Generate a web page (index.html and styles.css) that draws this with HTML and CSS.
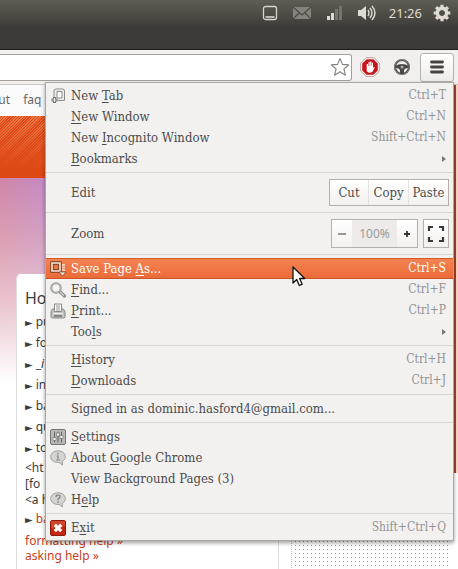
FILE: index.html
```html
<!DOCTYPE html>
<html lang="en">
<head>
<meta charset="utf-8">
<title>Browser menu</title>
<link rel="stylesheet" href="styles.css">
</head>
<body>
<header class="panel">
  <svg class="tray" width="16" height="16" viewBox="0 0 16 16"><rect x="1.500" y="1.500" width="13" height="13" rx="2" fill="none" stroke="#d8d4cc" stroke-width="1.300"/><path d="M3.500 12h9" stroke="#e4e0d8" stroke-width="1.500"/></svg>
  <svg class="tray mail" width="20" height="16" viewBox="0 0 20 16"><path d="M1 2h18v12H1z" fill="#86837c"/><path d="M1 2l9 8 9-8M1 14l6-6M19 14l-6-6" fill="none" stroke="#4b4944" stroke-width="1.200"/></svg>
  <svg class="tray signal" width="16" height="16" viewBox="0 0 16 16"><path d="M0 11h3v4H0zM4 8h3v7H4z" fill="#dfdbd2"/><path d="M8 4h3v11H8zM12 1h3v14h-3z" fill="#77746d"/></svg>
  <svg class="tray sound" width="20" height="16" viewBox="0 0 20 16"><path d="M1 5h3l5-4v14l-5-4H1z" fill="#dfdbd2"/><path d="M11 5q2 3 0 6M13 3q4 5 0 10M15 1q6 7 0 14" fill="none" stroke="#dfdbd2" stroke-width="1.400"/></svg>
  <span class="clock">21:26</span>
  <svg class="tray" width="18" height="18" viewBox="-9 -9 18 18"><circle r="4.700" fill="none" stroke="#dfdbd2" stroke-width="3.400"/><path d="M0-8.300V-5M0 5v3.300M-8.300 0H-5M5 0h3.300M-5.900-5.900l2.400 2.400M3.500 3.500l2.400 2.400M-5.900 5.900l2.400-2.400M3.500-3.500l2.400-2.400" stroke="#dfdbd2" stroke-width="3.200"/></svg>
</header>
<div class="toolbar">
  <div class="address">
    <input type="text" aria-label="Address">
    <button class="plain" aria-label="Bookmark this page"><svg width="20" height="20" viewBox="0 0 20 20"><path d="M10 1.500l2.400 5.900 6.300.5-4.800 4.100 1.500 6.200-5.400-3.400-5.400 3.400 1.500-6.200L1.300 7.900l6.300-.5z" fill="#fff" stroke="#85827e" stroke-width="1.100" stroke-linejoin="round"/></svg></button>
  </div>
  <button class="plain" aria-label="Ad blocker"><svg width="20" height="20" viewBox="0 0 20 20"><path d="M6 .7h8L19.300 6v8L14 19.300H6L.7 14V6z" fill="#fff" stroke="#b9817f" stroke-width=".8"/><path d="M6.600 2.200h6.800l4.400 4.400v6.800l-4.400 4.400H6.600l-4.400-4.400V6.600z" fill="#c9141c"/><path d="M6.700 7v5.500q0 3.200 3.300 3.200 2.200 0 3-1.700l1.700-3.700q-.9-.7-1.700 1V5.700h-1.200V9h-.4V4.500h-1.300V9h-.4V5H8.500v4h-.5V7z" fill="#fff"/></svg></button>
  <button class="plain wheel" aria-label="Steering wheel"><svg width="18" height="18" viewBox="0 0 18 18"><circle cx="9" cy="9" r="7" fill="#eeedeb" stroke="#55524f" stroke-width="2.200"/><circle cx="9" cy="9" r="7.400" fill="none" stroke="#a19e9a" stroke-width=".6"/><path d="M2 8q7-4 14 0l-1 2q-3 0-4 2v4H7v-4q-1-2-4-2z" fill="#4b4946"/><circle cx="9" cy="9" r="1.500" fill="#aaa"/></svg></button>
  <button class="menu-button" aria-label="Menu"><svg width="14" height="14" viewBox="0 0 14 14"><path d="M1.500 2h11M1.500 7h11M1.500 12h11" stroke="#45423f" stroke-width="2.800" stroke-linecap="round"/></svg></button>
</div>
<div class="page">
  <main class="site">
    <nav class="links"><a href="#">about</a><a href="#">faq</a></nav>
    <div class="banner"></div>
    <div class="columns">
      <section class="card">
        <h2>Ho</h2>
        <ul class="tips">
          <li>pu</li><li>fo</li><li>_<i>i</i></li><li>in</li><li>ba</li><li>qu</li><li>to</li>
        </ul>
        <p class="code">&lt;ht<br>[fo<br>&lt;a h</p>
        <ul class="tips hot"><li><a href="#">ba</a></li></ul>
        <p class="more"><a href="#">formatting help »</a><br><a href="#">asking help »</a></p>
      </section>
      <div class="dots"></div>
    </div>
  </main>
  <div class="edge"></div>
</div>

<div class="menu" role="menu">
  <button class="item" role="menuitem"><svg class="icon" width="16" height="16" viewBox="0 0 16 16"><path d="M4 9V3q0-2 2-2h6.500q2 0 2 2v9.500H7.500" fill="#ededeb" stroke="#8a8a86"/><path d="M7 3.500h5v6.500H7z" fill="#fff" stroke="#8a8a86"/><path d="M4.500 9v6M1.500 12h6" stroke="#777773" stroke-width="3"/><path d="M4.500 10v4M2.500 12h4" stroke="#e6e6e4"/></svg><span>New <u>T</u>ab</span><kbd>Ctrl+T</kbd></button>
  <button class="item" role="menuitem"><span><u>N</u>ew Window</span><kbd>Ctrl+N</kbd></button>
  <button class="item" role="menuitem"><span>New <u>I</u>ncognito Window</span><kbd>Shift+Ctrl+N</kbd></button>
  <button class="item" role="menuitem"><span><u>B</u>ookmarks</span><i class="arrow"></i></button>
  <hr>
  <div class="item edit"><span>Edit</span>
    <div class="group"><button>Cut</button><button>Copy</button><button>Paste</button></div>
  </div>
  <hr>
  <div class="item zoom"><span>Zoom</span>
    <div class="group"><button class="step" aria-label="Zoom out"><svg width="10" height="10" viewBox="0 0 10 10"><path d="M1 5h8" stroke="#777" stroke-width="1.500"/></svg></button><output>100%</output><button class="step" aria-label="Zoom in"><svg width="10" height="10" viewBox="0 0 10 10"><path d="M2 5h6M5 2v6" stroke="#333" stroke-width="1.800"/></svg></button></div>
    <div class="group"><button class="full" aria-label="Full screen"><svg width="18" height="18" viewBox="0 0 18 18"><path d="M2 6V2h4M12 2h4v4M16 12v4h-4M6 16H2v-4" fill="none" stroke="#3b3937" stroke-width="2.200"/></svg></button></div>
  </div>
  <hr>
  <button class="item active" role="menuitem"><svg class="icon" width="16" height="16" viewBox="0 0 16 16"><path d="M2 2h8v8H2z" fill="#e77443" stroke="#71412d" stroke-width="3.400"/><path d="M2 2h8v8H2z" fill="none" stroke="#ffe6d4" stroke-width="1.600"/><path d="M12 4h3M12 6.500h3M12 9h3" stroke="#ffe6d4" stroke-width="1.300"/><path d="M9 11h7l-3.500 4z" fill="#ffe6d4" stroke="#71412d" stroke-width=".7"/></svg><span>Save Page <u>A</u>s...</span><kbd>Ctrl+S</kbd></button>
  <button class="item" role="menuitem"><svg class="icon" width="16" height="16" viewBox="0 0 16 16"><path d="M9 9l5.500 5" stroke="#8b8b87" stroke-width="3.200" stroke-linecap="round"/><path d="M10 10l4 3.700" stroke="#d4d4d1" stroke-width="1.200"/><circle cx="6" cy="6" r="4.700" fill="#f5f5f4" stroke="#8b8b87" stroke-width="2"/><circle cx="6" cy="6" r="4.700" fill="none" stroke="#c9c9c6" stroke-width=".8"/></svg><span><u>F</u>ind...</span><kbd>Ctrl+F</kbd></button>
  <button class="item" role="menuitem"><svg class="icon" width="16" height="16" viewBox="0 0 16 16"><path d="M2.500 6L1 9v4.500q0 1.500 1.500 1.500h11q1.500 0 1.500-1.500V9l-1.500-3z" fill="#c4c4c1" stroke="#868683"/><path d="M4.500 1h7v7.500h-7z" fill="#fafafa" stroke="#898986"/><path d="M6 3h4M6 5h4M6 7h4" stroke="#999"/><path d="M3 10.500h10" stroke="#eee"/><path d="M4 13h8" stroke="#747471" stroke-width="1.500"/></svg><span><u>P</u>rint...</span><kbd>Ctrl+P</kbd></button>
  <button class="item" role="menuitem"><span>Too<u>l</u>s</span><i class="arrow"></i></button>
  <hr>
  <button class="item" role="menuitem"><span><u>H</u>istory</span><kbd>Ctrl+H</kbd></button>
  <button class="item" role="menuitem"><span><u>D</u>ownloads</span><kbd>Ctrl+J</kbd></button>
  <hr>
  <button class="item" role="menuitem"><span>Signed in as dominic.hasford4@gmail.com...</span></button>
  <hr>
  <button class="item" role="menuitem"><svg class="icon" width="16" height="16" viewBox="0 0 16 16"><rect x=".5" y=".5" width="15" height="15" rx="1.500" fill="#b9b9b6" stroke="#767673"/><path d="M4.500 2.500v11M8 2.500v11M11.500 2.500v11" stroke="#666663"/><path d="M3 8.500h3v3H3zM6.500 4h3v3h-3zM10 6.500h3v3h-3z" fill="#f5f5f3" stroke="#666663" stroke-width=".6"/></svg><span><u>S</u>ettings</span></button>
  <button class="item" role="menuitem"><svg class="icon" width="16" height="16" viewBox="0 0 16 16"><path d="M8 .8c4.200 0 7.300 2.500 7.300 5.800 0 2.300-1.300 4-3.300 5l.5 3.400-3.400-2.500C4 12.700.7 10 .7 6.600.7 3.300 3.800.8 8 .8z" fill="#d4d4d1" stroke="#a0a09d"/><path d="M7.800 2.700v1.800M6.500 6h1.500v4M6.300 10h3.500" fill="none" stroke="#878784" stroke-width="1.200"/></svg><span>About <u>G</u>oogle Chrome</span></button>
  <button class="item" role="menuitem"><span>View Background Pages (3)</span></button>
  <button class="item" role="menuitem"><svg class="icon" width="16" height="16" viewBox="0 0 16 16"><path d="M8 .8c4.200 0 7.300 2.500 7.300 5.800 0 2.300-1.300 4-3.300 5l.5 3.400-3.400-2.500C4 12.700.7 10 .7 6.600.7 3.300 3.800.8 8 .8z" fill="#d4d4d1" stroke="#a0a09d"/><path d="M6 5q0-2 2-2t2 1.700Q10 6 8 7v1.500M8 9.500V11" fill="none" stroke="#777774" stroke-width="1.200"/></svg><span>H<u>e</u>lp</span></button>
  <hr>
  <button class="item" role="menuitem"><svg class="icon" width="16" height="16" viewBox="0 0 16 16"><rect x=".5" y=".5" width="15" height="15" rx="1.500" fill="#c1280f" stroke="#8f1b0c"/><path d="M1 1h14v5Q8 9 1 8z" fill="#db5a3c" opacity=".6"/><path d="M4.800 4.800l6.400 6.400M11.200 4.800l-6.400 6.400" stroke="#fff" stroke-width="3.200"/></svg><span>E<u>x</u>it</span><kbd>Shift+Ctrl+Q</kbd></button>
</div>
<svg class="pointer" width="14" height="21" viewBox="0 0 14 21"><path d="M1 1v16l3.700-3.500L7.300 19.500l2.900-1.300-2.600-5.700H12.700z" fill="#fff" stroke="#111" stroke-width="1.300" stroke-linejoin="round"/></svg>
</body>
</html>
```
FILE: styles.css
```css
* { box-sizing: border-box; }

body {
  margin: 0;
  height: 100vh;
  overflow: hidden;
  display: flex;
  flex-direction: column;
  position: relative;
  background: #fff;
  font: 12px/15px "Noto Sans", sans-serif;
  color: #3c3c3c;
}

button {
  margin: 0;
  padding: 0;
  border: 0;
  background: none;
  font: inherit;
  color: inherit;
}

svg { display: block; flex: none; }
a { color: inherit; text-decoration: none; }

/* Desktop panel */
.panel {
  flex: none;
  height: 50px;
  padding: 0 7px 24px 0;
  display: flex;
  align-items: center;
  justify-content: flex-end;
  background: linear-gradient(#605c53, #4b4a43 16px, #3c3b37 28px);
  border-bottom: 1px solid #1f1e1b;
  color: #dfdbd2;
}
.mail { margin-left: 14px; }
.signal { margin-left: 15px; }
.sound { margin-left: 14px; }
.clock { margin: 0 11px 0 12px; font: 13px/18px "Noto Sans", sans-serif; }

/* Browser toolbar */
.toolbar {
  flex: none;
  height: 35px;
  padding: 3px 4px 3px 0;
  display: flex;
  align-items: center;
  background: #f1f0ee;
  border-bottom: 1px solid #c9c7c4;
}
.address {
  flex: 1;
  height: 27px;
  margin-right: 8px;
  padding-right: 1px;
  display: flex;
  align-items: center;
  background: #fff;
  border: 1px solid #a3a09c;
  border-left: 0;
  border-radius: 0 3px 3px 0;
}
.address input { flex: 1; min-width: 0; border: 0; outline: 0; background: none; }
.wheel { margin: 0 9px 0 13px; }
.menu-button {
  width: 34px;
  height: 29px;
  display: grid;
  place-items: center;
  border: 1px solid #b5b2ae;
  border-radius: 3px;
  background: linear-gradient(#fff, #ececea);
}

/* Web page */
.page { flex: 1; min-height: 0; display: flex; }
.site {
  flex: 1;
  background:
    linear-gradient(#ffffff00 0, #f0c8c860 60px, #f6dcdcb0 120px, #fff 205px) 0 93px no-repeat,
    linear-gradient(90deg, #cf86a6, #c48ac4 45px) 0 93px no-repeat;
}
.links {
  height: 31px;
  padding-top: 7px;
  display: flex;
  gap: 13px;
  margin-left: -23px;
  background: #fafafa;
  color: #666;
}
.banner {
  height: 62px;
  background:
    linear-gradient(#dd481440, #dd4814 56px),
    repeating-linear-gradient(135deg, #f08a5c 0 1px, #dd4814 1px 2px);
}
.columns { display: flex; height: 400px; padding: 96px 6px 0 16px; }
.card {
  flex: 0 0 263px;
  padding: 12px 8px;
  background: #fff;
  border: 1px solid #ddd;
  border-top-color: #fff;
  border-radius: 5px 5px 0 0;
}
.card h2 { margin: 0 0 2px; font: 16px/22px "Noto Sans", sans-serif; }
.card p, .card ul { margin: 0; padding: 0; list-style: none; }
.tips li { line-height: 21px; }
.tips li::before { content: "►"; font: 10px/12px "DejaVu Sans", sans-serif; margin-right: 3px; }
.card .code { padding-top: 2px; line-height: 16px; }
.hot a, .more { color: #c8401b; }
.card .more { padding-top: 4px; }
.dots {
  flex: 1;
  margin-left: 12px;
  border-left: 1px dotted #bbb;
  background:
    linear-gradient(90deg, #fff 3px, #ffffff00 3px) 0 0 / 4px 4px,
    linear-gradient(#fff 3px, #999 3px) 0 0 / 4px 4px;
}
.edge {
  width: 4px;
  height: 388px;
  border-left: 2px solid #a6402a;
  background: #fbd8c4;
}

/* Main menu */
.menu {
  position: absolute;
  top: 82px;
  right: 4px;
  width: 409px;
  padding: 2px 0;
  border: 1px solid #aaa8a5;
  background: #f2f1f0;
  box-shadow: 0 2px 4px #00000060;
  font: 13px/21px "DejaVu Serif Condensed", "DejaVu Serif", serif;
  color: #4c4c4c;
}
.item {
  width: 100%;
  min-height: 21px;
  padding: 0 7px 0 25px;
  display: flex;
  align-items: center;
  text-align: left;
}
.item > span { flex: 1; }
.icon { margin: 0 5px 0 -21px; }
.item u { text-underline-offset: 2px; text-decoration-thickness: 1px; }
.item kbd { font: inherit; font-size: 12px; color: #949494; }
.arrow {
  border: 3px solid #ffffff00;
  border-left: 4px solid #777;
  border-right: 0;
}
.item.active {
  color: #fff;
  background: linear-gradient(#f58453, #ea6a37);
  box-shadow: inset 0 1px #d45c2b, inset 0 -1px #ca5427;
}
.item.active kbd { color: #fff; }
.menu hr {
  height: 7px;
  margin: 0;
  border: 0;
  background: linear-gradient(#d6d5d3, #d6d5d3) 0 3px / 100% 1px no-repeat;
}
.edit { height: 33px; padding-right: 4px; }
.zoom { height: 35px; padding-right: 4px; gap: 5px; }
.group {
  display: flex;
  border: 1px solid #b3b1ae;
  background: linear-gradient(#fff, #f2f1ef);
}
.edit button {
  width: 38px;
  height: 25px;
}
.edit button + button { width: 40px; border-left: 1px solid #e3e2e0; }
.step, .full {
  width: 20px;
  height: 27px;
  display: grid;
  place-items: center;
}
.full { width: 24px; }
.zoom output {
  width: 45px;
  line-height: 27px;
  text-align: center;
  font-family: "Noto Sans", sans-serif;
  font-size: 12px;
  color: #999;
  background: #ecebea;
}

.pointer { position: absolute; left: 292px; top: 266px; }
```
